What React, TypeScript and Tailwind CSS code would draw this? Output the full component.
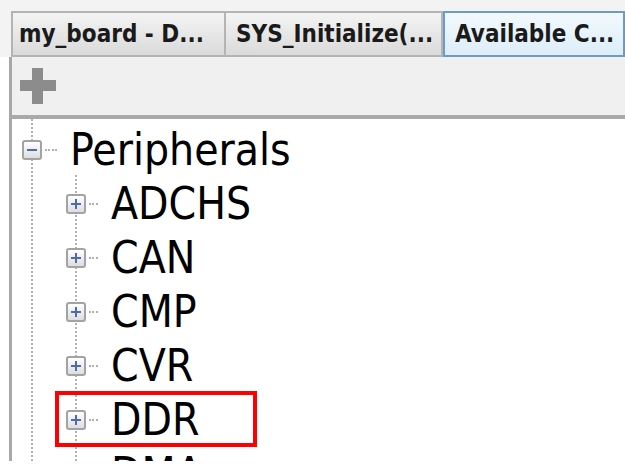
import React from "react";

function Box({ minus }: { minus?: boolean }) {
  return (
    <div className="relative z-10 flex h-[20px] w-[20px] shrink-0 items-center justify-center rounded-[3px] border-2 border-[#a3a3a3] bg-gradient-to-b from-[#ffffff] to-[#dedede]">
      <div className="absolute h-[2px] w-[10px] bg-[#4f6bb0]" />
      {!minus && <div className="absolute h-[10px] w-[2px] bg-[#4f6bb0]" />}
    </div>
  );
}

function Dots({ w }: { w: string }) {
  return <div className={`${w} shrink-0 border-t-2 border-dotted border-[#b0b0b0]`} />;
}

const items = ["ADCHS", "CAN", "CMP", "CVR", "DDR", "DMA"];

export default function App() {
  return (
    <div
      className="flex h-[465px] w-[625px] flex-col overflow-hidden bg-white"
      style={{ fontFamily: '"DejaVu Sans Condensed", "DejaVu Sans", sans-serif' }}
    >
      <div className="flex h-[461px] shrink-0 flex-col overflow-hidden">
        <div className="h-[11px] shrink-0 bg-[#f3f3f3]" />
        <div className="flex h-[46px] shrink-0 bg-[#f3f3f3] pl-[11px]">
          <div className="flex w-[215px] shrink-0 items-center border-2 border-[#b4b4b4] bg-gradient-to-b from-[#f4f4f4] to-[#dadada] pl-[6px] text-[24px] font-bold text-[#1a1a1a]">
            my_board - D...
          </div>
          <div className="flex w-[217px] shrink-0 items-center border-2 border-l-0 border-[#b4b4b4] bg-gradient-to-b from-[#f4f4f4] to-[#dadada] pl-[10px] text-[24px] font-bold text-[#1a1a1a]">
            SYS_Initialize(...
          </div>
          <div className="flex flex-1 items-center border-2 border-[#6c9bc6] bg-gradient-to-b from-[#f3f9fd] to-[#dcedf9] pl-[10px] text-[24px] font-bold text-[#1a1a1a]">
            Available C...
          </div>
        </div>
        <div className="ml-[9px] flex flex-1 flex-col overflow-hidden border-l-[3px] border-[#a8a8a8]">
          <div className="h-[62px] shrink-0 border-b-[4px] border-[#a9a9a9] bg-[#f0f0f0] pl-[8px] pt-[11px]">
            <div className="relative h-[36px] w-[36px]">
              <div className="absolute left-[12px] top-0 h-[36px] w-[11px] bg-[#8c8c8c]" />
              <div className="absolute left-0 top-[12px] h-[11px] w-[36px] bg-[#8c8c8c]" />
            </div>
          </div>
          <div className="relative flex-1 pt-[4px]">
            <div className="absolute bottom-0 left-[19px] top-0 border-l-2 border-dotted border-[#b0b0b0]" />
            <div className="absolute bottom-0 left-[63px] top-[56px] border-l-2 border-dotted border-[#b0b0b0]" />
            <div className="flex h-[54px] items-center">
              <div className="ml-[10px]">
                <Box minus />
              </div>
              <div className="ml-[3px]">
                <Dots w="w-[12px]" />
              </div>
              <span className="ml-[13px] text-[44px] leading-none text-black">Peripherals</span>
            </div>
            {items.map((t) => (
              <div key={t} className="flex h-[54px] items-center">
                <div className="ml-[54px]">
                  <Box />
                </div>
                <div className="ml-[3px]">
                  <Dots w="w-[9px]" />
                </div>
                <span className="ml-[13px] text-[44px] leading-none text-black">{t}</span>
              </div>
            ))}
            <div className="absolute left-[43px] top-[272px] h-[56px] w-[202px] border-4 border-[#ff0000]" />
          </div>
        </div>
      </div>
    </div>
  );
}
